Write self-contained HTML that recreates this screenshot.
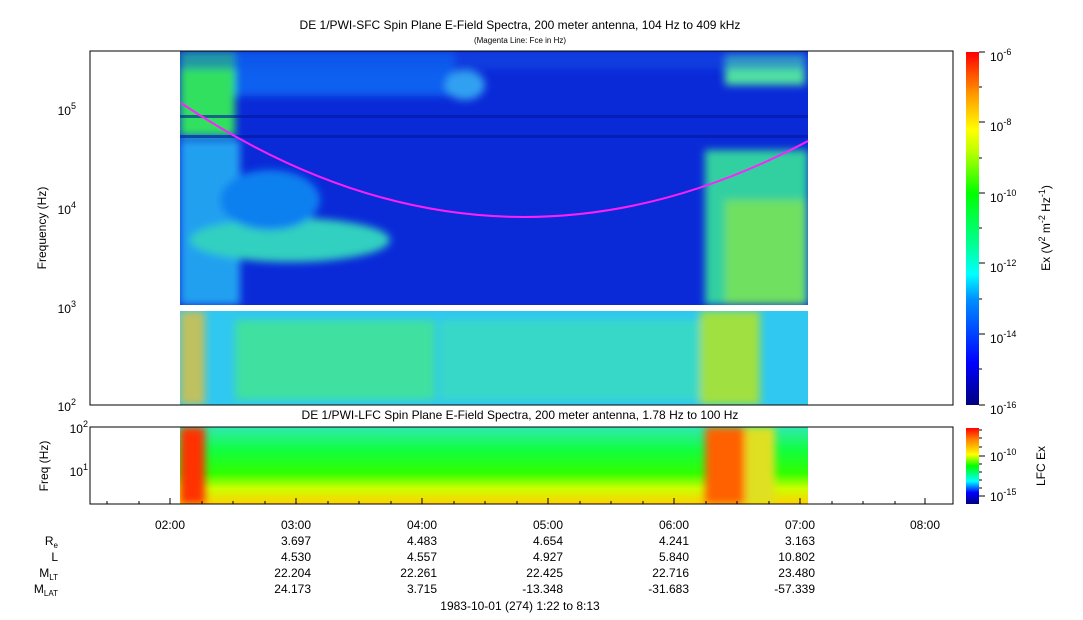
<!DOCTYPE html>
<html><head><meta charset="utf-8"><style>
body{margin:0;background:#fff;}
svg{display:block;font-family:"Liberation Sans",sans-serif;}
</style></head><body>
<svg width="1083" height="620" viewBox="0 0 1083 620" xmlns="http://www.w3.org/2000/svg">
<defs>
<linearGradient id="cb" x1="0" y1="1" x2="0" y2="0">
<stop offset="0" stop-color="#00007f"/><stop offset="0.12" stop-color="#0000ff"/>
<stop offset="0.3" stop-color="#0090ff"/><stop offset="0.37" stop-color="#00ffff"/>
<stop offset="0.45" stop-color="#00ff99"/><stop offset="0.6" stop-color="#00ff00"/>
<stop offset="0.72" stop-color="#c0ff00"/><stop offset="0.78" stop-color="#ffff00"/>
<stop offset="0.88" stop-color="#ff9900"/><stop offset="1" stop-color="#ff0000"/>
</linearGradient>
<linearGradient id="cb2" x1="0" y1="1" x2="0" y2="0">
<stop offset="0" stop-color="#00007f"/><stop offset="0.15" stop-color="#0000ff"/>
<stop offset="0.3" stop-color="#00ffff"/><stop offset="0.5" stop-color="#00ff00"/>
<stop offset="0.65" stop-color="#ffff00"/><stop offset="0.85" stop-color="#ff8000"/><stop offset="1" stop-color="#ff0000"/>
</linearGradient>
<linearGradient id="low" x1="0" y1="0" x2="0" y2="1">
<stop offset="0" stop-color="#30e8b0"/><stop offset="0.3" stop-color="#10ff40"/>
<stop offset="0.6" stop-color="#30ff00"/><stop offset="0.8" stop-color="#ccff00"/><stop offset="1" stop-color="#ffd000"/>
</linearGradient>
<filter id="bl"><feGaussianBlur stdDeviation="4"/></filter>
<clipPath id="c1"><rect x="180" y="51" width="628" height="254"/></clipPath>
<clipPath id="c2"><rect x="180" y="311" width="628" height="94"/></clipPath>
<clipPath id="c3"><rect x="180" y="427" width="628" height="77"/></clipPath>
</defs>
<text x="520" y="29" font-size="12" text-anchor="middle">DE 1/PWI-SFC  Spin Plane E-Field Spectra, 200 meter antenna, 104 Hz to 409 kHz</text>
<text x="520" y="43" font-size="8" text-anchor="middle">(Magenta Line: Fce in Hz)</text>
<rect x="180" y="51" width="628" height="254" fill="#0a2ad8"/>
<g filter="url(#bl)" clip-path="url(#c1)">
<rect x="180" y="51" width="55" height="85" fill="#30e060"/>
<rect x="235" y="51" width="220" height="45" fill="#1060f0"/>
<rect x="180" y="140" width="60" height="165" fill="#20a0f0"/>
<ellipse cx="290" cy="240" rx="100" ry="22" fill="#30d0c0"/>
<ellipse cx="270" cy="200" rx="50" ry="30" fill="#1080f0"/>
<rect x="705" y="150" width="103" height="155" fill="#30d0a0"/>
<rect x="725" y="200" width="80" height="105" fill="#70e060"/>
<rect x="725" y="55" width="80" height="30" fill="#50e0a0"/>
<ellipse cx="465" cy="85" rx="20" ry="15" fill="#30a0f0"/>
<rect x="180" y="51" width="628" height="18" fill="#1050e8" opacity="0.5"/>
</g>
<rect x="180" y="115" width="628" height="3" fill="#0018a0" opacity="0.6"/>
<rect x="180" y="135" width="628" height="3" fill="#0018a0" opacity="0.6"/>
<path d="M181,103 Q490,310 808,141" fill="none" stroke="#ff20ff" stroke-width="2"/>
<rect x="180" y="311" width="628" height="94" fill="#30c8f0"/>
<g filter="url(#bl)" clip-path="url(#c2)">
<rect x="235" y="320" width="200" height="80" fill="#40e0a0"/>
<rect x="180" y="311" width="25" height="94" fill="#c0c060"/>
<rect x="700" y="311" width="60" height="94" fill="#a0e040"/>
<rect x="440" y="320" width="260" height="80" fill="#38d8c8"/>
</g>
<rect x="90" y="51" width="863" height="354" fill="none" stroke="#000"/>
<g font-size="12" text-anchor="end">
<text x="76" y="115">10<tspan font-size="9" dy="-6">5</tspan></text>
<text x="76" y="214">10<tspan font-size="9" dy="-6">4</tspan></text>
<text x="76" y="313">10<tspan font-size="9" dy="-6">3</tspan></text>
<text x="76" y="411">10<tspan font-size="9" dy="-6">2</tspan></text>
</g>
<text transform="translate(46,228) rotate(-90)" font-size="12" text-anchor="middle">Frequency (Hz)</text>
<rect x="966" y="52" width="13" height="353" fill="url(#cb)"/>
<path d="M979,52h6M979,122h6M979,193h6M979,263h6M979,334h6M979,405h6M979,87h3M979,158h3M979,228h3M979,299h3M979,369h3" stroke="#000"/>
<g font-size="12">
<text x="990" y="61">10<tspan font-size="9" dy="-6">-6</tspan></text>
<text x="990" y="131">10<tspan font-size="9" dy="-6">-8</tspan></text>
<text x="990" y="202">10<tspan font-size="9" dy="-6">-10</tspan></text>
<text x="990" y="272">10<tspan font-size="9" dy="-6">-12</tspan></text>
<text x="990" y="343">10<tspan font-size="9" dy="-6">-14</tspan></text>
<text x="990" y="414">10<tspan font-size="9" dy="-6">-16</tspan></text>
</g>
<text transform="translate(1050,228) rotate(-90)" font-size="12" text-anchor="middle">Ex (V<tspan font-size="9" dy="-5">2</tspan><tspan dy="5"> m</tspan><tspan font-size="9" dy="-5">-2</tspan><tspan dy="5"> Hz</tspan><tspan font-size="9" dy="-5">-1</tspan><tspan dy="5">)</tspan></text>
<text x="520" y="419" font-size="12" text-anchor="middle">DE 1/PWI-LFC  Spin Plane E-Field Spectra, 200 meter antenna, 1.78 Hz to 100 Hz</text>
<rect x="180" y="427" width="628" height="77" fill="url(#low)"/>
<g filter="url(#bl)" clip-path="url(#c3)">
<rect x="180" y="427" width="25" height="77" fill="#ff3000"/>
<rect x="705" y="427" width="40" height="77" fill="#ff6000"/>
<rect x="745" y="427" width="30" height="77" fill="#e0e020"/>
</g>
<rect x="90" y="427" width="863" height="77" fill="none" stroke="#000"/>
<g font-size="12" text-anchor="end">
<text x="88" y="433">10<tspan font-size="9" dy="-6">2</tspan></text>
<text x="88" y="476">10<tspan font-size="9" dy="-6">1</tspan></text>
</g>
<text transform="translate(48,466) rotate(-90)" font-size="12" text-anchor="middle">Freq (Hz)</text>
<rect x="966" y="428" width="13" height="76" fill="url(#cb2)"/>
<path d="M979,456h6M979,496h6M979,430h3M979,438h3M979,447h3M979,464h3M979,472h3M979,480h3M979,488h3" stroke="#000"/>
<g font-size="12">
<text x="990" y="461">10<tspan font-size="9" dy="-6">-10</tspan></text>
<text x="990" y="501">10<tspan font-size="9" dy="-6">-15</tspan></text>
</g>
<text transform="translate(1045,466) rotate(-90)" font-size="12" text-anchor="middle">LFC Ex</text>
<g stroke="#000">
<path d="M170,504v-6M296,504v-6M422,504v-6M548,504v-6M674,504v-6M800,504v-6M925,504v-6M107,504v-3M139,504v-3M202,504v-3M233,504v-3M265,504v-3M328,504v-3M359,504v-3M391,504v-3M454,504v-3M485,504v-3M517,504v-3M580,504v-3M611,504v-3M643,504v-3M706,504v-3M737,504v-3M769,504v-3M832,504v-3M863,504v-3M895,504v-3"/>
</g>
<g font-size="12" text-anchor="middle">
<text x="170" y="529">02:00</text><text x="296" y="529">03:00</text><text x="422" y="529">04:00</text>
<text x="548" y="529">05:00</text><text x="674" y="529">06:00</text><text x="800" y="529">07:00</text><text x="925" y="529">08:00</text>
</g>
<g font-size="12" text-anchor="end">
<text x="58" y="545">R<tspan font-size="8" dy="3">e</tspan></text>
<text x="58" y="561">L</text>
<text x="58" y="577">M<tspan font-size="8" dy="3">LT</tspan></text>
<text x="58" y="593">M<tspan font-size="8" dy="3">LAT</tspan></text>
<text x="311" y="545">3.697</text><text x="437" y="545">4.483</text><text x="563" y="545">4.654</text><text x="689" y="545">4.241</text><text x="815" y="545">3.163</text>
<text x="311" y="561">4.530</text><text x="437" y="561">4.557</text><text x="563" y="561">4.927</text><text x="689" y="561">5.840</text><text x="815" y="561">10.802</text>
<text x="311" y="577">22.204</text><text x="437" y="577">22.261</text><text x="563" y="577">22.425</text><text x="689" y="577">22.716</text><text x="815" y="577">23.480</text>
<text x="311" y="593">24.173</text><text x="437" y="593">3.715</text><text x="563" y="593">-13.348</text><text x="689" y="593">-31.683</text><text x="815" y="593">-57.339</text>
</g>
<text x="520" y="610" font-size="12" text-anchor="middle">1983-10-01 (274) 1:22 to 8:13</text>
</svg>
</body></html>
